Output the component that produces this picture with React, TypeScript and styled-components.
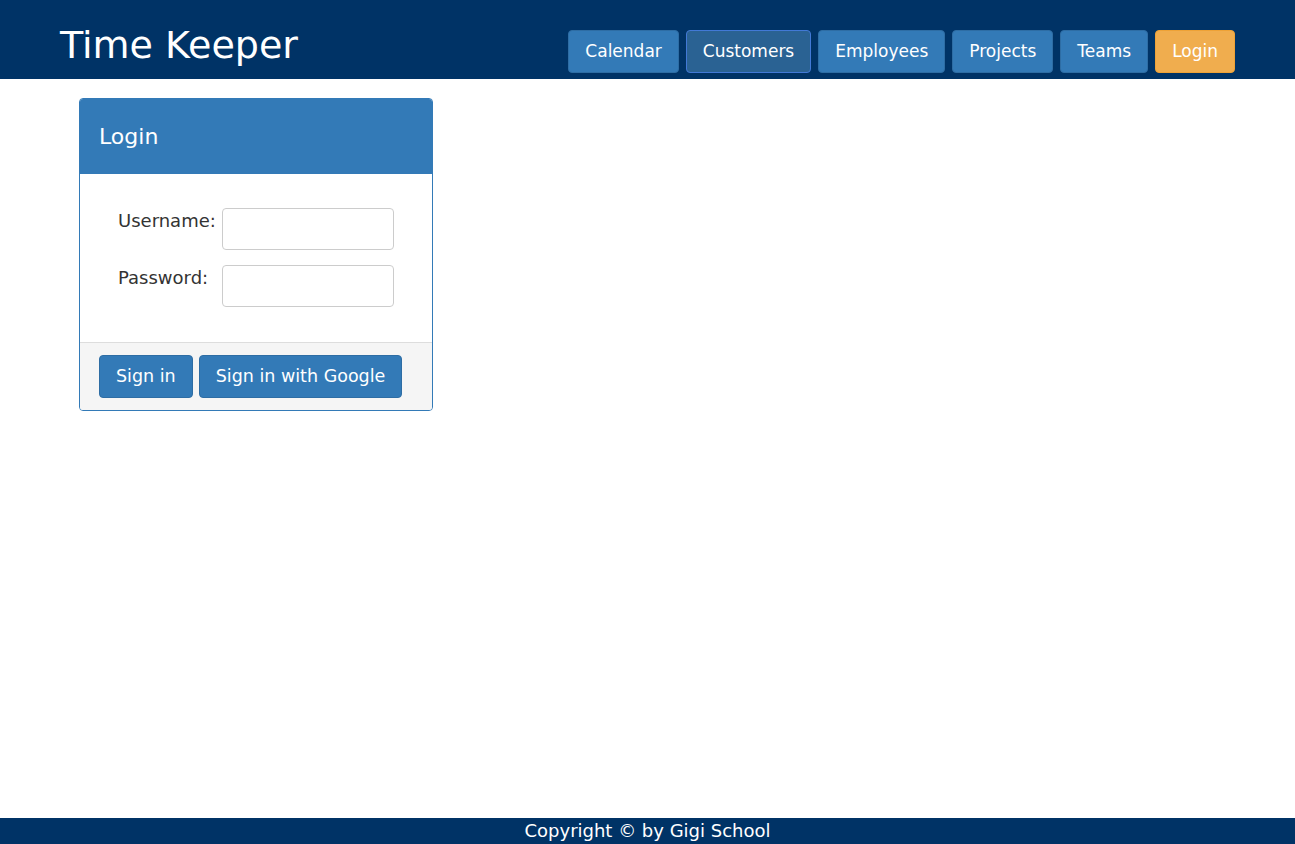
import React, { FC, useState } from 'react'
import styled, { createGlobalStyle, css } from 'styled-components'

const GlobalStyle = createGlobalStyle`
    html, body {
        margin: 0;
        padding: 0;
    }
    body {
        font-family: "DejaVu Sans", Verdana, sans-serif;
        color: #333;
        background: #fff;
    }
    * {
        box-sizing: border-box;
    }
`

const Page = styled.div`
    min-height: 100vh;
    display: flex;
    flex-direction: column;
`

const Header = styled.header`
    height: 79px;
    background: #003366;
    display: flex;
    align-items: flex-end;
    justify-content: space-between;
    padding: 0 60px 6px 60px;
`

const Title = styled.div`
    color: #fff;
    font-size: 38px;
    line-height: 44px;
    margin-bottom: 6px;
`

const Nav = styled.nav`
    display: flex;
    gap: 7px;
`

type Variant = 'primary' | 'active' | 'warning'

const variants = {
    primary: css`
        background: #337ab7;
        border-color: #2e6da4;
    `,
    active: css`
        background: #2a6293;
        border-color: #4279d6;
    `,
    warning: css`
        background: #f0ad4e;
        border-color: #eea236;
    `,
}

const Button = styled.button<{ $variant?: Variant; $size?: number }>`
    font-family: inherit;
    font-size: ${p => p.$size || 17}px;
    line-height: 21px;
    padding: 10px 16px;
    color: #fff;
    border: 1px solid;
    border-radius: 4px;
    cursor: pointer;
    ${p => variants[p.$variant || 'primary']}
`

const Main = styled.main`
    flex: 1;
    padding: 19px 79px;
`

const Panel = styled.section`
    width: 354px;
    border: 1px solid #337ab7;
    border-radius: 4px;
    overflow: hidden;
`

const PanelHeading = styled.div`
    background: #337ab7;
    color: #fff;
    font-size: 22px;
    line-height: 26px;
    padding: 25px 19px 24px;
`

const PanelBody = styled.div`
    display: flex;
    justify-content: center;
    padding: 34px 0 35px;
`

const FormGrid = styled.div`
    display: grid;
    grid-template-columns: 99px 172px;
    column-gap: 5px;
    row-gap: 15px;
`

const Label = styled.label`
    font-size: 18px;
    line-height: 22px;
    padding-top: 2px;
    color: #333;
`

const Input = styled.input`
    width: 172px;
    height: 42px;
    border: 1px solid #ccc;
    border-radius: 4px;
    font-family: inherit;
    font-size: 16px;
    padding: 6px 10px;
`

const PanelFooter = styled.div`
    background: #f5f5f5;
    border-top: 1px solid #ddd;
    padding: 12px 19px;
    display: flex;
    gap: 6px;
`

const Footer = styled.footer`
    height: 26px;
    background: #003366;
    color: #fff;
    text-align: center;
    font-size: 18px;
    line-height: 26px;
`

const navItems: { label: string; variant: Variant }[] = [
    { label: 'Calendar', variant: 'primary' },
    { label: 'Customers', variant: 'active' },
    { label: 'Employees', variant: 'primary' },
    { label: 'Projects', variant: 'primary' },
    { label: 'Teams', variant: 'primary' },
    { label: 'Login', variant: 'warning' },
]

const App: FC = () => {
    const [username, setUsername] = useState('')
    const [password, setPassword] = useState('')

    return (
        <Page>
            <GlobalStyle />
            <Header>
                <Title>Time Keeper</Title>
                <Nav>
                    {navItems.map(item => (
                        <Button key={item.label} $variant={item.variant}>
                            {item.label}
                        </Button>
                    ))}
                </Nav>
            </Header>
            <Main>
                <Panel>
                    <PanelHeading>Login</PanelHeading>
                    <PanelBody>
                        <FormGrid>
                            <Label htmlFor="username">Username:</Label>
                            <Input
                                id="username"
                                value={username}
                                onChange={e => setUsername(e.target.value)}
                            />
                            <Label htmlFor="password">Password:</Label>
                            <Input
                                id="password"
                                type="password"
                                value={password}
                                onChange={e => setPassword(e.target.value)}
                            />
                        </FormGrid>
                    </PanelBody>
                    <PanelFooter>
                        <Button $size={17.5}>Sign in</Button>
                        <Button $size={17.5}>Sign in with Google</Button>
                    </PanelFooter>
                </Panel>
            </Main>
            <Footer>Copyright © by Gigi School</Footer>
        </Page>
    )
}

export default App
